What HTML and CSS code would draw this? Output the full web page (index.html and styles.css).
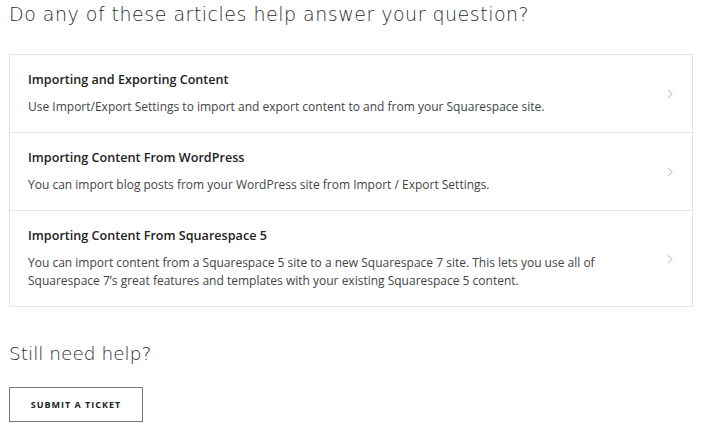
FILE: index.html
```html
<!DOCTYPE html>
<html lang="en">
<head>
  <meta charset="UTF-8" />
  <title>Help articles</title>
  <link rel="stylesheet" href="styles.css">
</head>
<body>
  <h2 class="section-title">Do any of these articles help answer your question?</h2>
  <div class="articles">
    <a class="article" href="#">
      <div class="article-text">
        <div class="article-title">Importing and Exporting Content</div>
        <div class="article-desc">Use Import/Export Settings to import and export content to and from your Squarespace site.</div>
      </div>
      <svg class="chevron" width="6" height="10" viewBox="0 0 6 10"><path d="M1 1l4 4-4 4" fill="none" stroke="#ccc" stroke-width="1.2"/></svg>
    </a>
    <a class="article" href="#">
      <div class="article-text">
        <div class="article-title">Importing Content From WordPress</div>
        <div class="article-desc">You can import blog posts from your WordPress site from Import / Export Settings.</div>
      </div>
      <svg class="chevron" width="6" height="10" viewBox="0 0 6 10"><path d="M1 1l4 4-4 4" fill="none" stroke="#ccc" stroke-width="1.2"/></svg>
    </a>
    <a class="article" href="#">
      <div class="article-text">
        <div class="article-title">Importing Content From Squarespace 5</div>
        <div class="article-desc">You can import content from a Squarespace 5 site to a new Squarespace 7 site. This lets you use all of Squarespace 7’s great features and templates with your existing Squarespace 5 content.</div>
      </div>
      <svg class="chevron" width="6" height="10" viewBox="0 0 6 10"><path d="M1 1l4 4-4 4" fill="none" stroke="#ccc" stroke-width="1.2"/></svg>
    </a>
  </div>
  <h2 class="help-title">Still need help?</h2>
  <button class="ticket-btn">SUBMIT A TICKET</button>
</body>
</html>
```

FILE: styles.css
```css
body {
  margin: 0;
  padding: 0 13px 0 9px;
  font-family: "Open Sans", Arial, sans-serif;
  color: #333;
  background: #fff;
}
.section-title {
  margin: 2px 0 0;
  font-family: "DejaVu Sans", sans-serif;
  font-size: 19px;
  font-weight: 200;
  letter-spacing: 0.5px;
  line-height: 24px;
  color: #2b2b2b;
}
.articles {
  margin-top: 28px;
  border: 1px solid #e6e6e6;
  width: 682px;
}
.article {
  display: flex;
  align-items: center;
  padding: 16px 18px 16px;
  text-decoration: none;
  color: inherit;
}
.article + .article {
  border-top: 1px solid #e6e6e6;
}
.article-text {
  flex: 1;
  padding-right: 50px;
}
.article-title {
  font-size: 12.6px;
  font-weight: 600;
  line-height: 18px;
  color: #222;
}
.article-desc {
  margin-top: 9px;
  font-size: 12px;
  line-height: 18px;
  color: #444;
}
.chevron {
  margin-right: 1px;
}
.help-title {
  margin: 35px 0 0;
  font-family: "DejaVu Sans", sans-serif;
  font-size: 18.5px;
  font-weight: 200;
  line-height: 24px;
  color: #2b2b2b;
}
.ticket-btn {
  margin-top: 21px;
  width: 134px;
  height: 35px;
  background: #fff;
  border: 1.5px solid #777;
  font-family: inherit;
  font-size: 9px;
  font-weight: 700;
  letter-spacing: 1px;
  color: #222;
}
```
